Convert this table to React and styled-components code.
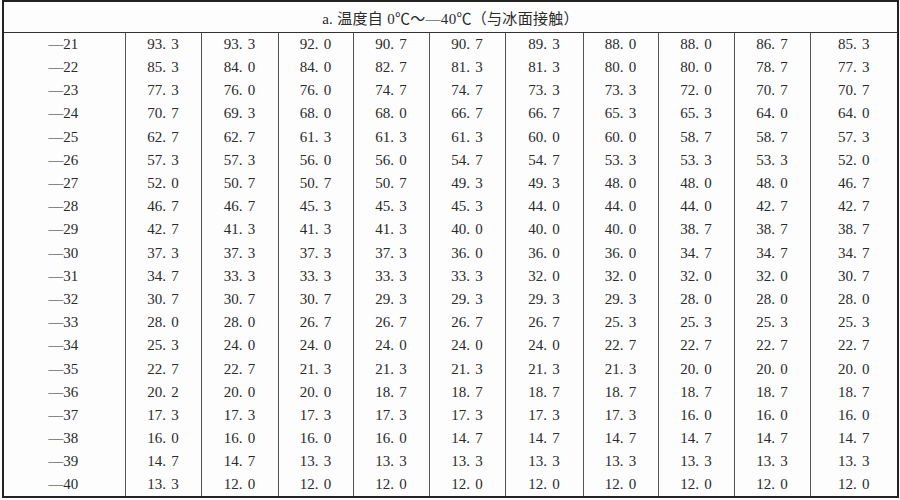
import React from 'react';
import styled, { createGlobalStyle } from 'styled-components';

const rows = [
    ['-21', '93.3', '93.3', '92.0', '90.7', '90.7', '89.3', '88.0', '88.0', '86.7', '85.3'],
    ['-22', '85.3', '84.0', '84.0', '82.7', '81.3', '81.3', '80.0', '80.0', '78.7', '77.3'],
    ['-23', '77.3', '76.0', '76.0', '74.7', '74.7', '73.3', '73.3', '72.0', '70.7', '70.7'],
    ['-24', '70.7', '69.3', '68.0', '68.0', '66.7', '66.7', '65.3', '65.3', '64.0', '64.0'],
    ['-25', '62.7', '62.7', '61.3', '61.3', '61.3', '60.0', '60.0', '58.7', '58.7', '57.3'],
    ['-26', '57.3', '57.3', '56.0', '56.0', '54.7', '54.7', '53.3', '53.3', '53.3', '52.0'],
    ['-27', '52.0', '50.7', '50.7', '50.7', '49.3', '49.3', '48.0', '48.0', '48.0', '46.7'],
    ['-28', '46.7', '46.7', '45.3', '45.3', '45.3', '44.0', '44.0', '44.0', '42.7', '42.7'],
    ['-29', '42.7', '41.3', '41.3', '41.3', '40.0', '40.0', '40.0', '38.7', '38.7', '38.7'],
    ['-30', '37.3', '37.3', '37.3', '37.3', '36.0', '36.0', '36.0', '34.7', '34.7', '34.7'],
    ['-31', '34.7', '33.3', '33.3', '33.3', '33.3', '32.0', '32.0', '32.0', '32.0', '30.7'],
    ['-32', '30.7', '30.7', '30.7', '29.3', '29.3', '29.3', '29.3', '28.0', '28.0', '28.0'],
    ['-33', '28.0', '28.0', '26.7', '26.7', '26.7', '26.7', '25.3', '25.3', '25.3', '25.3'],
    ['-34', '25.3', '24.0', '24.0', '24.0', '24.0', '24.0', '22.7', '22.7', '22.7', '22.7'],
    ['-35', '22.7', '22.7', '21.3', '21.3', '21.3', '21.3', '21.3', '20.0', '20.0', '20.0'],
    ['-36', '20.2', '20.0', '20.0', '18.7', '18.7', '18.7', '18.7', '18.7', '18.7', '18.7'],
    ['-37', '17.3', '17.3', '17.3', '17.3', '17.3', '17.3', '17.3', '16.0', '16.0', '16.0'],
    ['-38', '16.0', '16.0', '16.0', '16.0', '14.7', '14.7', '14.7', '14.7', '14.7', '14.7'],
    ['-39', '14.7', '14.7', '13.3', '13.3', '13.3', '13.3', '13.3', '13.3', '13.3', '13.3'],
    ['-40', '13.3', '12.0', '12.0', '12.0', '12.0', '12.0', '12.0', '12.0', '12.0', '12.0'],
];

const widths = [122, 76, 77, 75, 76, 76, 78, 75, 76, 76, 88];

const Value = ({ text }) => {
    const [whole, frac] = text.split('.');
    return (
        <>
            {whole}<Dot>.</Dot>{frac}
        </>
    );
};

const App = () => {
    return (
        <>
            <GlobalStyle />
            <Page>
                <Table>
                    <colgroup>
                        {widths.map((w, idx) => (
                            <col key={idx} style={{ width: w }} />
                        ))}
                    </colgroup>
                    <thead>
                        <tr>
                            <Title colSpan={11}>a. 温度自 0℃～—40℃（与冰面接触）</Title>
                        </tr>
                    </thead>
                    <tbody>
                        {rows.map((row, idx) => (
                            <Row key={idx} $last={idx === rows.length - 1}>
                                <Label>—{row[0].slice(1)}</Label>
                                {row.slice(1).map((v, i) => (
                                    <Cell key={i}><Value text={v} /></Cell>
                                ))}
                            </Row>
                        ))}
                    </tbody>
                </Table>
            </Page>
        </>
    );
}

const GlobalStyle = createGlobalStyle`
    html, body{
        margin:0;
        padding:0;
        background:#fff;
    }
`

const Page = styled.div`
    width:900px;
    height:500px;
    padding:0 0 0 2px;
    box-sizing:border-box;
    background:#fdfdfd;
`

const Table = styled.table`
    width:895px;
    table-layout:fixed;
    border-collapse:collapse;
    border:2px solid #222;
    color:#2a2a2a;
    font-family:"Liberation Serif", "Noto Sans CJK SC", serif;
    font-size:15px;
`

const Title = styled.th`
    height:30px;
    padding:0;
    border-bottom:1px solid #333;
    font-weight:normal;
    font-size:15px;
    letter-spacing:0.3px;
    text-align:center;
    font-family:"Liberation Serif", "Noto Sans CJK SC", serif;
`

const Row = styled.tr`
    height:${props => props.$last ? '23px' : '23.2px'};
`

const Cell = styled.td`
    padding:0;
    text-align:center;
    border-left:1px solid #555;
    line-height:23px;
`

const Label = styled(Cell)`
    border-left:none;
    padding-right:2px;
`

const Dot = styled.span`
    display:inline-block;
    width:9px;
    text-align:left;
`

export default App
